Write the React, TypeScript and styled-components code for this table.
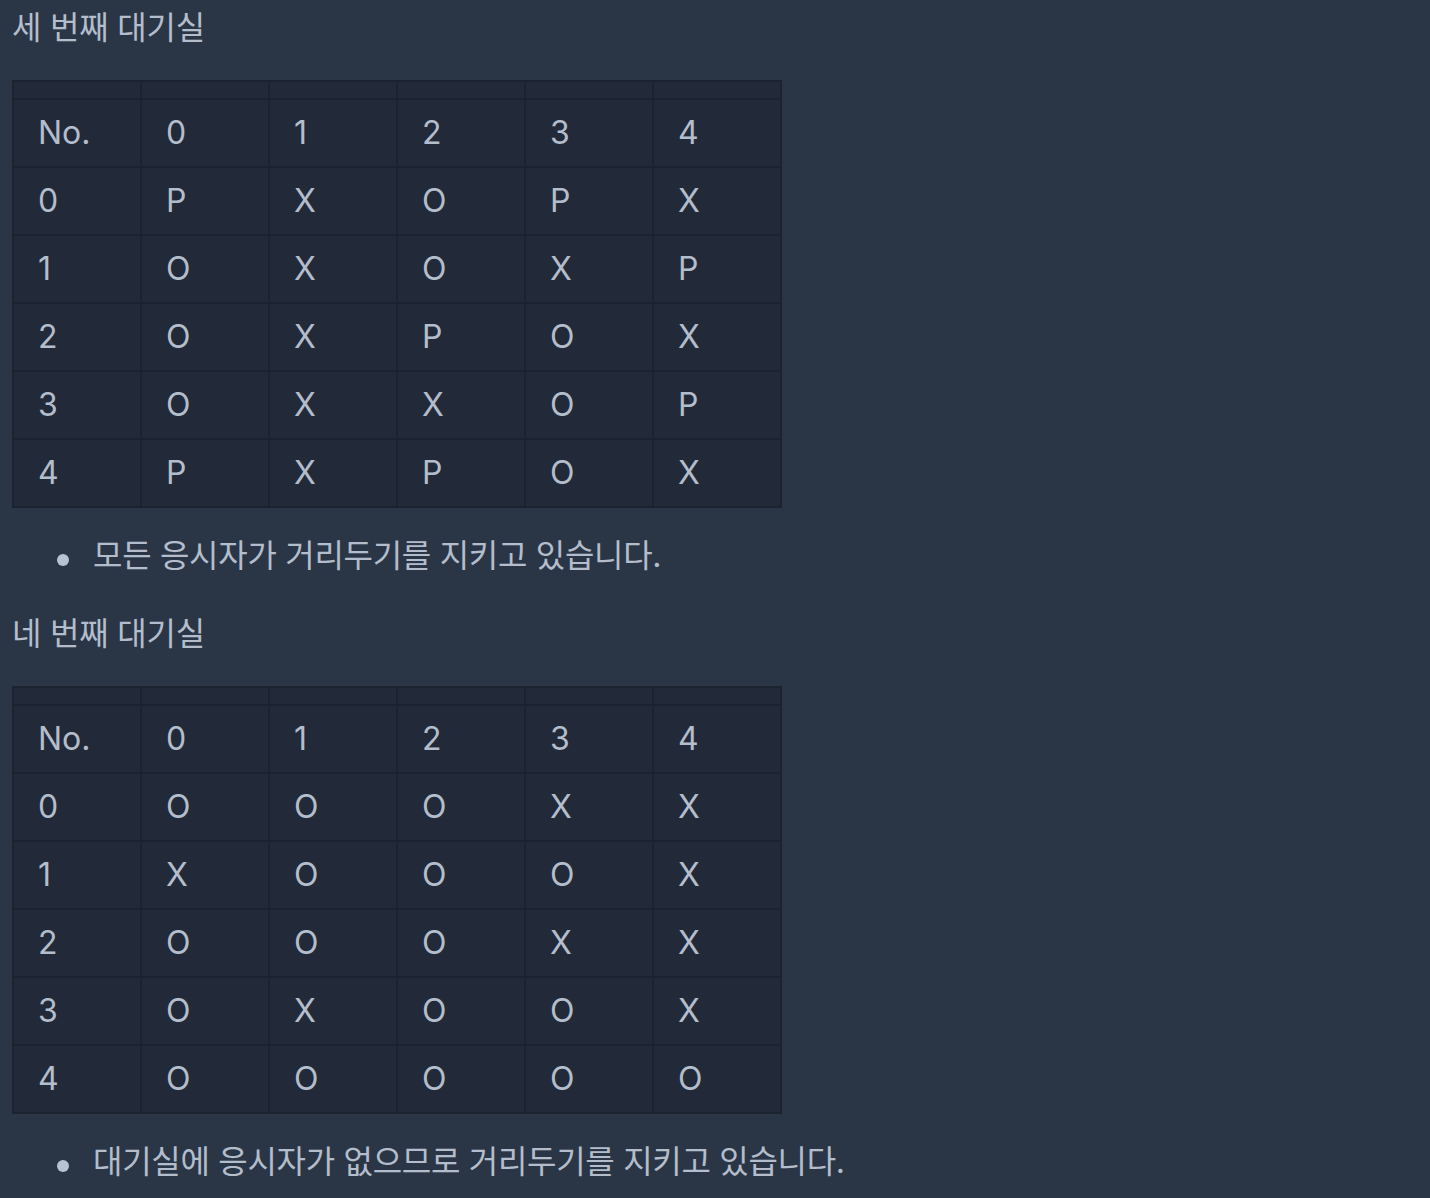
import styled, { createGlobalStyle } from "styled-components";

const GlobalStyle = createGlobalStyle`
  html, body {
    margin: 0;
    padding: 0;
    background-color: #2a3646;
  }
  body {
    font-family: "Inter", "Noto Sans CJK KR", sans-serif;
    color: #b3bdcc;
  }
`;

const Page = styled.div`
  min-height: 1198px;
  padding: 4px 12px 0;
  box-sizing: border-box;
  background-color: #2a3646;
`;

const RoomTitle = styled.p`
  margin: 0 0 28px;
  font-size: 32px;
  line-height: 48px;
  letter-spacing: -0.2px;
`;

const Table = styled.table`
  border-collapse: collapse;
  background-color: #222a39;
  font-size: 32px;
  border: 2px solid #1b2230;
`;

const HeadCell = styled.th`
  width: 126px;
  height: 16px;
  padding: 0;
  border: 2px solid #1b2230;
`;

const Cell = styled.td`
  height: 66px;
  padding: 0 0 0 24px;
  border: 2px solid #1b2230;
  line-height: 48px;
  text-align: left;
`;

const Notes = styled.ul`
  margin: 24px 0 30px;
  padding-left: 81px;
  list-style: none;
  font-size: 32px;
  line-height: 48px;
  letter-spacing: -0.3px;
`;

const Note = styled.li`
  position: relative;

  &::before {
    content: "";
    position: absolute;
    left: -36px;
    top: 22px;
    width: 12px;
    height: 12px;
    border-radius: 50%;
    background-color: #b8c2d0;
  }
`;

interface RoomProps {
  title: string;
  grid: string[];
  note: string;
}

function Room(props: RoomProps) {
  const cols = [0, 1, 2, 3, 4];
  return (
    <>
      <RoomTitle>{props.title}</RoomTitle>
      <Table>
        <thead>
          <tr>
            {[...cols, 5].map((c) => (
              <HeadCell key={c} />
            ))}
          </tr>
        </thead>
        <tbody>
          <tr>
            <Cell>No.</Cell>
            {cols.map((c) => (
              <Cell key={c}>{c}</Cell>
            ))}
          </tr>
          {props.grid.map((row, r) => (
            <tr key={r}>
              <Cell>{r}</Cell>
              {row.split("").map((v, c) => (
                <Cell key={c}>{v}</Cell>
              ))}
            </tr>
          ))}
        </tbody>
      </Table>
      <Notes>
        <Note>{props.note}</Note>
      </Notes>
    </>
  );
}

export default function App() {
  return (
    <Page>
      <GlobalStyle />
      <Room
        title="세 번째 대기실"
        grid={["PXOPX", "OXOXP", "OXPOX", "OXXOP", "PXPOX"]}
        note="모든 응시자가 거리두기를 지키고 있습니다."
      />
      <Room
        title="네 번째 대기실"
        grid={["OOOXX", "XOOOX", "OOOXX", "OXOOX", "OOOOO"]}
        note="대기실에 응시자가 없으므로 거리두기를 지키고 있습니다."
      />
    </Page>
  );
}
